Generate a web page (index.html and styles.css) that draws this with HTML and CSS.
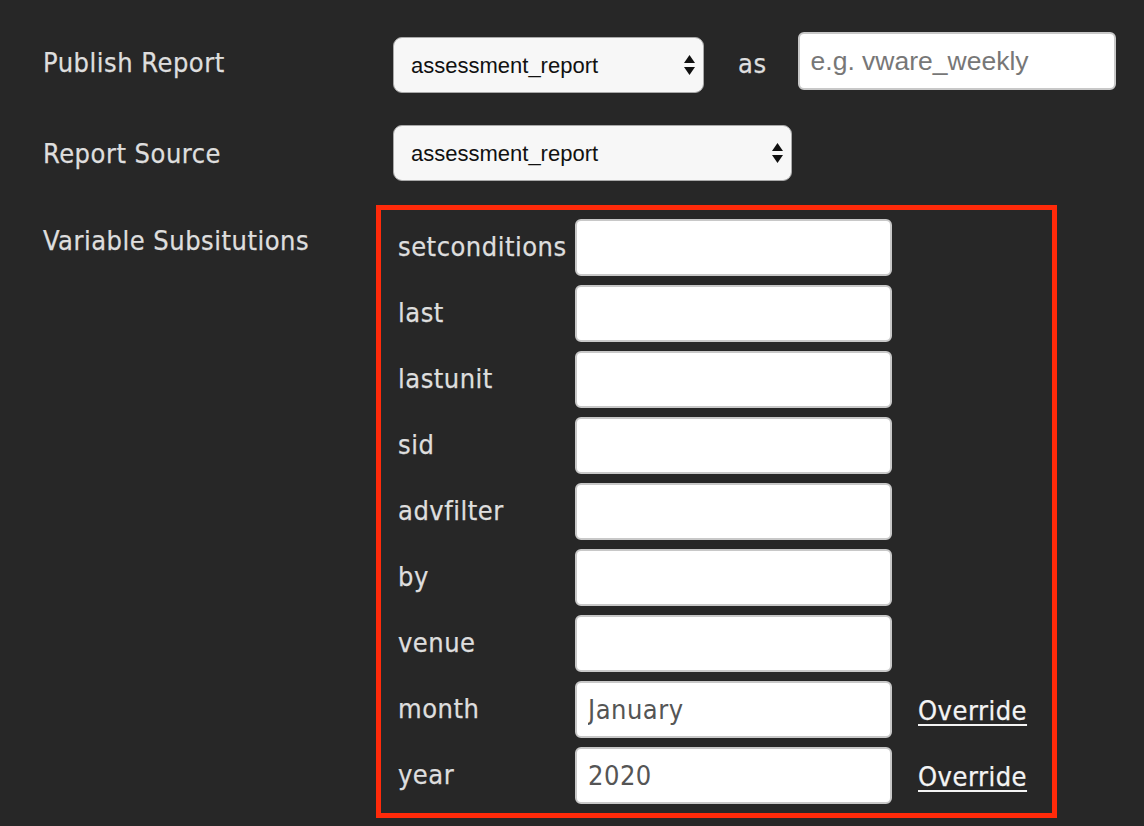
FILE: index.html
```html
<!DOCTYPE html>
<html lang="en">
<head>
    <meta charset="UTF-8">
    <title>Publish Report</title>
    <link rel="stylesheet" href="styles.css">
</head>
<body>
    <form class="publish-form">
        <div class="form-row first">
            <label class="row-label">Publish Report</label>
            <div class="row-controls">
                <span class="select-wrap wide">
                    <select class="report-select">
                        <option>assessment_report</option>
                    </select>
                    <svg class="select-arrows" width="11" height="21" viewBox="0 0 11 21"><path d="M5.5 0 L11 8 L0 8 Z M0 12 L11 12 L5.5 20 Z" fill="#111"/></svg>
                </span>
                <span class="as-label">as</span>
                <input class="text-input name-input" type="text" placeholder="e.g. vware_weekly">
            </div>
        </div>

        <div class="form-row second">
            <label class="row-label">Report Source</label>
            <div class="row-controls">
                <span class="select-wrap wider">
                    <select class="report-select">
                        <option>assessment_report</option>
                    </select>
                    <svg class="select-arrows" width="11" height="21" viewBox="0 0 11 21"><path d="M5.5 0 L11 8 L0 8 Z M0 12 L11 12 L5.5 20 Z" fill="#111"/></svg>
                </span>
            </div>
        </div>

        <div class="form-row third">
            <label class="row-label vars-label">Variable Subsitutions</label>
            <div class="vars-box">
                <div class="var-row"><span class="var-name">setconditions</span><input class="text-input var-input" type="text"></div>
                <div class="var-row"><span class="var-name">last</span><input class="text-input var-input" type="text"></div>
                <div class="var-row"><span class="var-name">lastunit</span><input class="text-input var-input" type="text"></div>
                <div class="var-row"><span class="var-name">sid</span><input class="text-input var-input" type="text"></div>
                <div class="var-row"><span class="var-name">advfilter</span><input class="text-input var-input" type="text"></div>
                <div class="var-row"><span class="var-name">by</span><input class="text-input var-input" type="text"></div>
                <div class="var-row"><span class="var-name">venue</span><input class="text-input var-input" type="text"></div>
                <div class="var-row"><span class="var-name">month</span><input class="text-input var-input" type="text" value="January"><a class="override" href="#">Override</a></div>
                <div class="var-row"><span class="var-name">year</span><input class="text-input var-input" type="text" value="2020"><a class="override" href="#">Override</a></div>
            </div>
        </div>
    </form>
</body>
</html>
```

FILE: styles.css
```css
body {
    margin: 0;
    background-color: #272727;
    color: #dedede;
    font-family: "DejaVu Sans Condensed", "DejaVu Sans", sans-serif;
    font-size: 27px;
    letter-spacing: 0.5px;
    -webkit-text-stroke: 0.25px;
}
.publish-form {
    padding: 32px 0 0 43px;
}
.form-row {
    display: flex;
    align-items: center;
}
.form-row.first {
    height: 61px;
}
.form-row.second {
    margin-top: 32px;
    height: 56px;
}
.form-row.third {
    margin-top: 24px;
    align-items: flex-start;
}
.row-label {
    width: 350px;
    flex-shrink: 0;
}
.vars-label {
    margin-top: 20px;
}
.row-controls {
    display: flex;
    align-items: center;
    height: 100%;
}
.select-wrap {
    position: relative;
    display: inline-block;
    height: 56px;
    align-self: flex-end;
}
.select-wrap.wide {
    width: 311px;
}
.select-wrap.wider {
    width: 399px;
}
.report-select {
    -webkit-appearance: none;
    appearance: none;
    width: 100%;
    height: 56px;
    box-sizing: border-box;
    padding: 0 30px 0 17px;
    background-color: #f7f7f7;
    border: 1.5px solid #a9a9a9;
    border-radius: 9px;
    font-family: "Liberation Sans", Arial, sans-serif;
    font-size: 22px;
    letter-spacing: 0;
    -webkit-text-stroke: 0;
    color: #111;
}
.select-arrows {
    position: absolute;
    right: 9px;
    top: 18px;
    pointer-events: none;
}
.as-label {
    margin: 0 31px 0 34px;
    align-self: center;
    padding-top: 2px;
}
.text-input {
    box-sizing: border-box;
    background: #fff;
    border: 2px solid #c8c8c8;
    border-radius: 6px;
    outline: none;
}
.name-input {
    width: 318px;
    height: 58px;
    align-self: flex-start;
    padding: 0 11px;
    font-family: "Liberation Sans", Arial, sans-serif;
    font-size: 26.5px;
    letter-spacing: 0;
    -webkit-text-stroke: 0;
}
.name-input::placeholder {
    color: #777;
}
.vars-box {
    border: 5px solid #ff2a0a;
    width: 681px;
    box-sizing: border-box;
    margin-left: -17px;
    padding: 9px 27px 10px 17px;
    display: flex;
    flex-direction: column;
    gap: 10px;
}
.var-row {
    display: flex;
    align-items: center;
    height: 56px;
}
.var-name {
    width: 177px;
    flex-shrink: 0;
    padding-bottom: 1px;
}
.var-input {
    width: 317px;
    height: 57px;
    padding: 0 11px;
    font-family: "DejaVu Sans Condensed", "DejaVu Sans", sans-serif;
    font-size: 27px;
    letter-spacing: 0.5px;
    -webkit-text-stroke: 0;
    color: #555;
}
.override {
    margin-left: 26px;
    color: #f4f4f4;
    font-size: 27px;
    text-decoration: underline;
    text-underline-offset: 4px;
    padding-top: 3px;
}
```
